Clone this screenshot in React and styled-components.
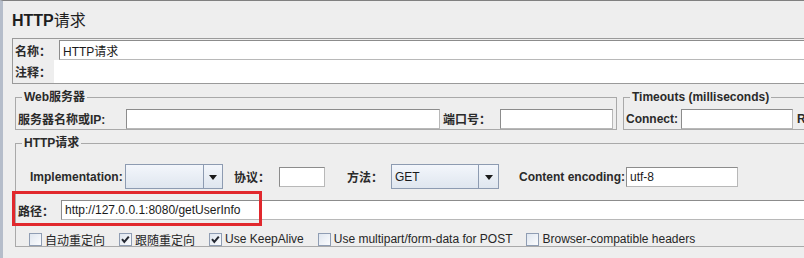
import React from 'react';
import styled, { createGlobalStyle } from 'styled-components';

const Global = createGlobalStyle`
  html, body { margin: 0; padding: 0; background: #eeeeee; overflow: hidden; }
  body {
    font-family: "Liberation Sans", "Noto Sans CJK SC", sans-serif;
    font-size: 12px;
    color: #222;
  }
  * { box-sizing: border-box; }
`;

const Frame = styled.div`
  width: 804px;
  height: 258px;
  overflow: hidden;
  background: #eeeeee;
  border-top: 1px solid #808080;
  border-left: 3px solid #b5bdca;
`;

const Panel = styled.div`
  width: 900px;
  padding-left: 9px;
  display: flex;
  flex-direction: column;
`;

const Title = styled.div`
  height: 37px;
  padding-top: 10px;
  font-size: 16px;
  line-height: 20px;
  font-weight: bold;
  color: #1e1e1e;
`;

const TitleCjk = styled.span`
  font-weight: normal;
`;

const NameBox = styled.div`
  border: 1px solid #9a9a9a;
  padding: 1px 0 0 2px;
  display: flex;
  flex-direction: column;
`;

const NameRow = styled.div`
  display: flex;
  align-items: stretch;
  height: ${p => p.$h}px;
`;

const Label = styled.span`
  flex: none;
  width: ${p => p.$w}px;
  margin-left: ${p => p.$ml || 0}px;
  font-weight: bold;
  color: #2a2a2a;
  white-space: nowrap;
  display: flex;
  align-items: center;
`;

const Field = styled.div`
  flex: ${p => (p.$w ? 'none' : '1')};
  width: ${p => (p.$w ? `${p.$w}px` : 'auto')};
  height: ${p => p.$h || 20}px;
  background: #fff;
  border: ${p => (p.$flat ? 'none' : '1px solid #8c8c8c')};
  border-right-color: #b8b8b8;
  border-bottom-color: #b8b8b8;
  padding-left: 3px;
  display: flex;
  align-items: center;
  white-space: nowrap;
  color: #1a1a1a;
`;

const ServerRow = styled.div`
  display: flex;
  gap: 6px;
  margin: 6px 0 0 3px;
`;

const Group = styled.fieldset`
  margin: 0;
  min-width: 0;
  border: 1px solid #a9a9a9;
  padding: ${p => p.$pad};
  flex: ${p => (p.$w ? 'none' : '1')};
  width: ${p => (p.$w ? `${p.$w}px` : 'auto')};
`;

const Legend = styled.legend`
  margin-left: 4px;
  padding: 0 2px;
  font-weight: bold;
  line-height: 14px;
  color: #2a2a2a;
  white-space: nowrap;
`;

const Row = styled.div`
  display: flex;
  align-items: center;
  height: ${p => p.$h}px;
  margin-top: ${p => p.$mt || 0}px;
  padding-left: ${p => p.$pl || 0}px;
  position: relative;
`;

const Combo = styled.div`
  flex: none;
  width: ${p => p.$w}px;
  height: 25px;
  display: flex;
  border: 1px solid #8d9bb1;
  background: linear-gradient(#f3f6fb, #dfe6ef);
`;

const ComboText = styled.div`
  flex: 1;
  padding-left: 3px;
  display: flex;
  align-items: center;
  color: #1a1a1a;
  border-right: 1px solid #8d9bb1;
`;

const ComboArrow = styled.div`
  flex: none;
  width: ${p => p.$w}px;
  display: flex;
  align-items: center;
  justify-content: center;
  &::after {
    content: "";
    border-left: 4px solid transparent;
    border-right: 4px solid transparent;
    border-top: 5px solid #1a1a1a;
    margin-top: 2px;
  }
`;

const Highlight = styled.div`
  position: absolute;
  left: -6px;
  top: -9px;
  width: 250px;
  height: 35px;
  border: 3px solid #e1282d;
  pointer-events: none;
`;

const Checks = styled.div`
  display: flex;
  align-items: center;
  gap: 14px;
  margin-top: 12px;
  padding-left: 11px;
  height: 14px;
`;

const CheckItem = styled.label`
  display: flex;
  align-items: center;
  gap: 3px;
  white-space: nowrap;
  color: #262626;
`;

const Box = styled.span`
  width: 13px;
  height: 13px;
  border: 1px solid #8f9db3;
  background: linear-gradient(135deg, #dfe6ef, #fbfcfe);
  display: flex;
  align-items: center;
  justify-content: center;
`;

const Check = ({ checked, children }) => (
  <CheckItem>
    <Box>
      {checked && (
        <svg width="11" height="11" viewBox="0 0 11 11">
          <path d="M2 5.2 L4.3 8 L8.8 2.6" fill="none" stroke="#262a33" strokeWidth="2" />
        </svg>
      )}
    </Box>
    {children}
  </CheckItem>
);

export default function App() {
  return (
    <>
      <Global />
      <Frame>
        <Panel>
          <Title>HTTP<TitleCjk>请求</TitleCjk></Title>
          <NameBox>
            <NameRow $h={20}>
              <Label $w={44}>名称：</Label>
              <Field>HTTP请求</Field>
            </NameRow>
            <NameRow $h={23}>
              <Label $w={39}>注释：</Label>
              <Field $flat $h={23} />
            </NameRow>
          </NameBox>

          <ServerRow>
            <Group $w={602} $pad="4px 2px 0 2px">
              <Legend>Web服务器</Legend>
              <Row $h={21}>
                <Label $w={108}>服务器名称或IP:</Label>
                <Field $w={314} />
                <Label $w={57} $ml={3}>端口号：</Label>
                <Field $w={113} />
              </Row>
            </Group>
            <Group $pad="4px 2px 0 2px">
              <Legend>Timeouts (milliseconds)</Legend>
              <Row $h={21}>
                <Label $w={55}>Connect:</Label>
                <Field $w={112} />
                <Label $w={70} $ml={4}>Response:</Label>
              </Row>
            </Group>
          </ServerRow>

          <ServerRow>
            <Group $pad="14px 0 0 2px">
              <Legend>HTTP请求</Legend>
              <Row $h={25} $pl={12}>
                <Label $w={95}>Implementation:</Label>
                <Combo $w={98}>
                  <ComboText />
                  <ComboArrow $w={18} />
                </Combo>
                <Label $w={45} $ml={11}>协议：</Label>
                <Field $w={46} />
                <Label $w={44} $ml={22}>方法：</Label>
                <Combo $w={108}>
                  <ComboText>GET</ComboText>
                  <ComboArrow $w={19} />
                </Combo>
                <Label $w={107} $ml={20}>Content encoding:</Label>
                <Field $w={112}>utf-8</Field>
              </Row>
              <Row $h={20} $mt={11}>
                <Label $w={43}>路径：</Label>
                <Field>http://127.0.0.1:8080/getUserInfo</Field>
                <Highlight />
              </Row>
              <Checks>
                <Check>自动重定向</Check>
                <Check checked>跟随重定向</Check>
                <Check checked>Use KeepAlive</Check>
                <Check>Use multipart/form-data for POST</Check>
                <Check>Browser-compatible headers</Check>
              </Checks>
            </Group>
          </ServerRow>
        </Panel>
      </Frame>
    </>
  );
}
